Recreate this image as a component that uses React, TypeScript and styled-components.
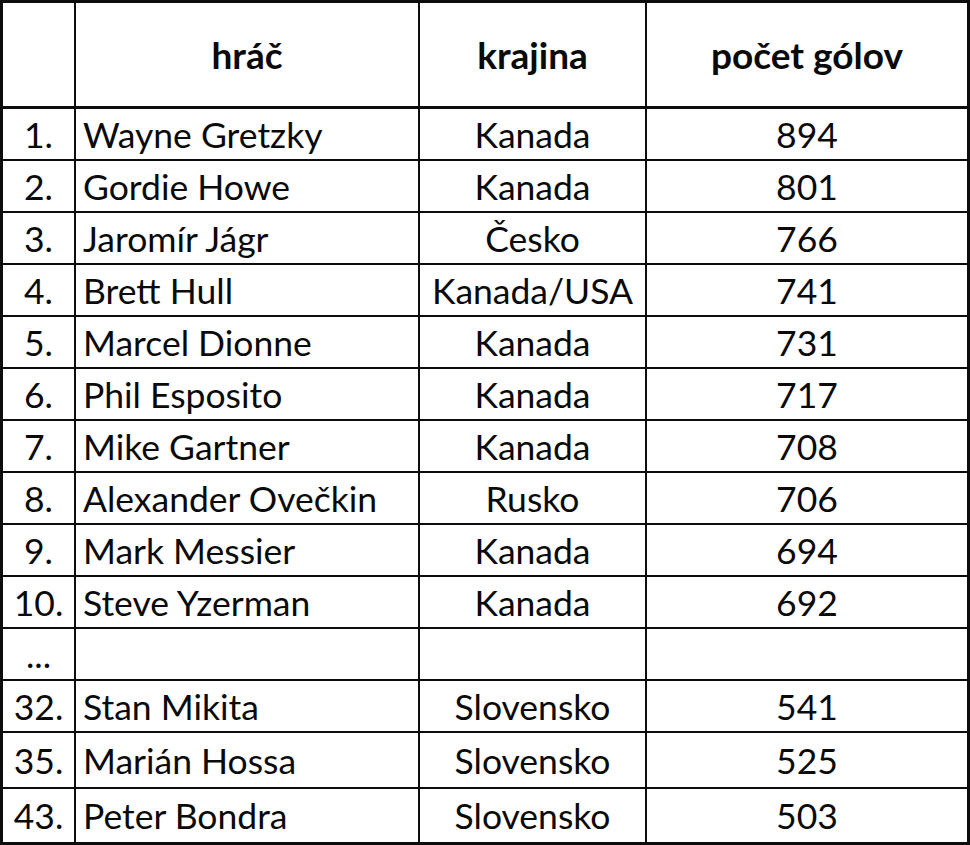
import React from 'react';
import styled, { createGlobalStyle } from 'styled-components';

const GlobalStyle = createGlobalStyle`
  html, body {
    margin: 0;
    padding: 0;
    background: #ffffff;
  }
  * {
    box-sizing: border-box;
  }
`;

const Table = styled.div`
  width: 970px;
  height: 845px;
  border: 3px solid #0d0d0d;
  display: grid;
  grid-template-columns: 73px 344px 227px 1fr;
  grid-template-rows: 106px repeat(12, 52px) 56px 53px;
  font-family: Lato, 'Noto Sans', sans-serif;
  color: #0a0a0a;
  background: #ffffff;
`;

const Cell = styled.div<{ $align?: 'left' | 'center'; $head?: boolean; $last?: boolean; $bottom?: boolean }>`
  display: flex;
  align-items: center;
  justify-content: ${(p) => (p.$align === 'left' ? 'flex-start' : 'center')};
  padding-left: ${(p) => (p.$align === 'left' ? '7px' : '0')};
  border-right: ${(p) => (p.$last ? 'none' : '2.5px solid #0d0d0d')};
  border-bottom: ${(p) => (p.$bottom ? 'none' : p.$head ? '3px solid #0d0d0d' : '2px solid #0d0d0d')};
  font-size: ${(p) => (p.$head ? '37px' : '35.5px')};
  font-weight: ${(p) => (p.$head ? 700 : 400)};
  white-space: nowrap;
`;

type Row = { rank: string; name: string; country: string; goals: string };

const rows: Row[] = [
  { rank: '1.', name: 'Wayne Gretzky', country: 'Kanada', goals: '894' },
  { rank: '2.', name: 'Gordie Howe', country: 'Kanada', goals: '801' },
  { rank: '3.', name: 'Jaromír Jágr', country: 'Česko', goals: '766' },
  { rank: '4.', name: 'Brett Hull', country: 'Kanada/USA', goals: '741' },
  { rank: '5.', name: 'Marcel Dionne', country: 'Kanada', goals: '731' },
  { rank: '6.', name: 'Phil Esposito', country: 'Kanada', goals: '717' },
  { rank: '7.', name: 'Mike Gartner', country: 'Kanada', goals: '708' },
  { rank: '8.', name: 'Alexander Ovečkin', country: 'Rusko', goals: '706' },
  { rank: '9.', name: 'Mark Messier', country: 'Kanada', goals: '694' },
  { rank: '10.', name: 'Steve Yzerman', country: 'Kanada', goals: '692' },
  { rank: '...', name: '', country: '', goals: '' },
  { rank: '32.', name: 'Stan Mikita', country: 'Slovensko', goals: '541' },
  { rank: '35.', name: 'Marián Hossa', country: 'Slovensko', goals: '525' },
  { rank: '43.', name: 'Peter Bondra', country: 'Slovensko', goals: '503' },
];

export default function App() {
  return (
    <>
      <GlobalStyle />
      <Table>
        <Cell $head />
        <Cell $head>hráč</Cell>
        <Cell $head>krajina</Cell>
        <Cell $head $last>počet gólov</Cell>
        {rows.map((r, i) => {
          const bottom = i === rows.length - 1;
          return (
            <React.Fragment key={r.rank}>
              <Cell $bottom={bottom}>{r.rank}</Cell>
              <Cell $align="left" $bottom={bottom}>{r.name}</Cell>
              <Cell $bottom={bottom}>{r.country}</Cell>
              <Cell $last $bottom={bottom}>{r.goals}</Cell>
            </React.Fragment>
          );
        })}
      </Table>
    </>
  );
}
